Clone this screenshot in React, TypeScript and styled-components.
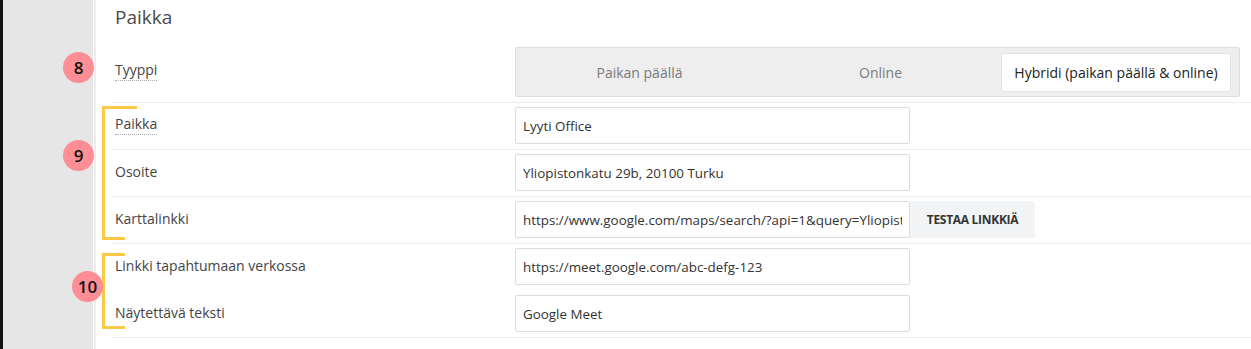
import React from 'react';
import styled, { createGlobalStyle } from 'styled-components';

const GlobalStyle = createGlobalStyle`
    html, body {
        margin: 0;
        padding: 0;
        background: #ffffff;
    }
    body {
        font-family: "Open Sans", Lato, sans-serif;
        color: #444;
    }
`;

const Page = styled.div`
    display: flex;
    width: 1251px;
    height: 349px;
    overflow: hidden;
    background: #fff;
`;

const Edge = styled.div`
    width: 3px;
    background: #111;
`;

const Sidebar = styled.div`
    width: 90px;
    background: #e6e6e6;
    border-right: 1px solid #fff;
`;

const Divider = styled.div`
    width: 2px;
    background: #ececec;
`;

const Main = styled.div`
    flex: 1;
    padding-left: 15px;
`;

const Heading = styled.h2`
    margin: 0;
    height: 40px;
    padding: 4px 0 0 4px;
    box-sizing: border-box;
    font-size: 19px;
    font-weight: 400;
    color: #4a4a4a;
`;

const Group = styled.div`
    position: relative;
`;

const Row = styled.div<{ $line?: boolean; $tall?: boolean }>`
    display: grid;
    grid-template-columns: 404px 1fr;
    align-items: center;
    padding: ${(p) => (p.$tall ? '7px 11px 5px 0' : '4px 0 5px 0')};
    border-bottom: 1px solid ${(p) => (p.$line ? '#ececec' : 'transparent')};
`;

const Label = styled.div<{ $hint?: boolean }>`
    padding-left: 4px;
    padding-bottom: ${(p) => (p.$hint ? '5px' : '2px')};
    font-size: 14px;
    color: #444;
`;

const Hint = styled.span`
    border-bottom: 1px dotted #aaa;
    padding-bottom: 1px;
`;

const Field = styled.div`
    display: flex;
    align-items: stretch;
`;

const Input = styled.input`
    width: 395px;
    height: 37px;
    box-sizing: border-box;
    border: 1px solid #dcdcdc;
    border-radius: 2px;
    padding: 0 7px;
    font-family: "Open Sans", sans-serif;
    font-size: 13.4px;
    color: #333;
    background: #fff;
    outline: none;
`;

const TestButton = styled.button`
    width: 125px;
    border: 0;
    background: #f3f4f6;
    font-family: "Open Sans", sans-serif;
    font-weight: 700;
    font-size: 12px;
    letter-spacing: -0.3px;
    color: #333;
    border-radius: 0 2px 2px 0;
`;

const Segments = styled.div`
    display: grid;
    grid-template-columns: 1fr 1fr 230px;
    height: 50px;
    box-sizing: border-box;
    padding: 5px 8px 4px 3px;
    background: #eeeeee;
    border: 1px solid #dedede;
    border-radius: 2px;
`;

const Segment = styled.div<{ $active?: boolean }>`
    display: flex;
    align-items: center;
    justify-content: center;
    font-size: 14px;
    white-space: nowrap;
    color: ${(p) => (p.$active ? '#222' : '#7a7a7a')};
    background: ${(p) => (p.$active ? '#fff' : 'transparent')};
    border: 1px solid ${(p) => (p.$active ? '#e2e2e2' : 'transparent')};
    border-radius: 2px;
`;

const Bracket = styled.div<{ $top: number; $height: number; $topTick: number }>`
    position: absolute;
    left: -9px;
    top: ${(p) => p.$top}px;
    height: ${(p) => p.$height}px;
    width: 3px;
    background: #fcc947;

    &::before,
    &::after {
        content: '';
        position: absolute;
        left: 0;
        height: 3px;
        background: #fcc947;
    }
    &::before {
        top: 0;
        width: ${(p) => p.$topTick}px;
    }
    &::after {
        bottom: 0;
        width: 23px;
    }
`;

const Badge = styled.div<{ $left: number; $top: number }>`
    position: absolute;
    left: ${(p) => p.$left}px;
    top: ${(p) => p.$top}px;
    width: 31px;
    height: 31px;
    border-radius: 50%;
    background: #fd8e96;
    color: #111;
    display: flex;
    align-items: center;
    justify-content: center;
    font-family: "Open Sans", sans-serif;
    font-weight: 600;
    font-size: 17px;
`;

const App: React.FC = () => {
    return (
        <>
            <GlobalStyle />
            <Page>
                <Edge />
                <Sidebar />
                <Divider />
                <Main>
                    <Heading>Paikka</Heading>

                    <Group>
                        <Badge $left={-48} $top={12}>8</Badge>
                        <Row $line $tall>
                            <Label $hint>
                                <Hint>Tyyppi</Hint>
                            </Label>
                            <Segments>
                                <Segment>Paikan päällä</Segment>
                                <Segment>Online</Segment>
                                <Segment $active>Hybridi (paikan päällä &amp; online)</Segment>
                            </Segments>
                        </Row>
                    </Group>

                    <Group>
                        <Bracket $top={3} $height={134} $topTick={35} />
                        <Badge $left={-48} $top={37}>9</Badge>
                        <Row $line>
                            <Label $hint>
                                <Hint>Paikka</Hint>
                            </Label>
                            <Field>
                                <Input readOnly value="Lyyti Office" />
                            </Field>
                        </Row>
                        <Row $line>
                            <Label>Osoite</Label>
                            <Field>
                                <Input readOnly value="Yliopistonkatu 29b, 20100 Turku" />
                            </Field>
                        </Row>
                        <Row $line>
                            <Label>Karttalinkki</Label>
                            <Field>
                                <Input
                                    readOnly
                                    value="https://www.google.com/maps/search/?api=1&query=Yliopistonkatu+29b+20100+Turku"
                                />
                                <TestButton>TESTAA LINKKIÄ</TestButton>
                            </Field>
                        </Row>
                    </Group>

                    <Group>
                        <Bracket $top={9} $height={76} $topTick={23} />
                        <Badge $left={-39} $top={27}>10</Badge>
                        <Row>
                            <Label>Linkki tapahtumaan verkossa</Label>
                            <Field>
                                <Input readOnly value="https://meet.google.com/abc-defg-123" />
                            </Field>
                        </Row>
                        <Row $line>
                            <Label>Näytettävä teksti</Label>
                            <Field>
                                <Input readOnly value="Google Meet" />
                            </Field>
                        </Row>
                    </Group>
                </Main>
            </Page>
        </>
    );
};

export default App;
